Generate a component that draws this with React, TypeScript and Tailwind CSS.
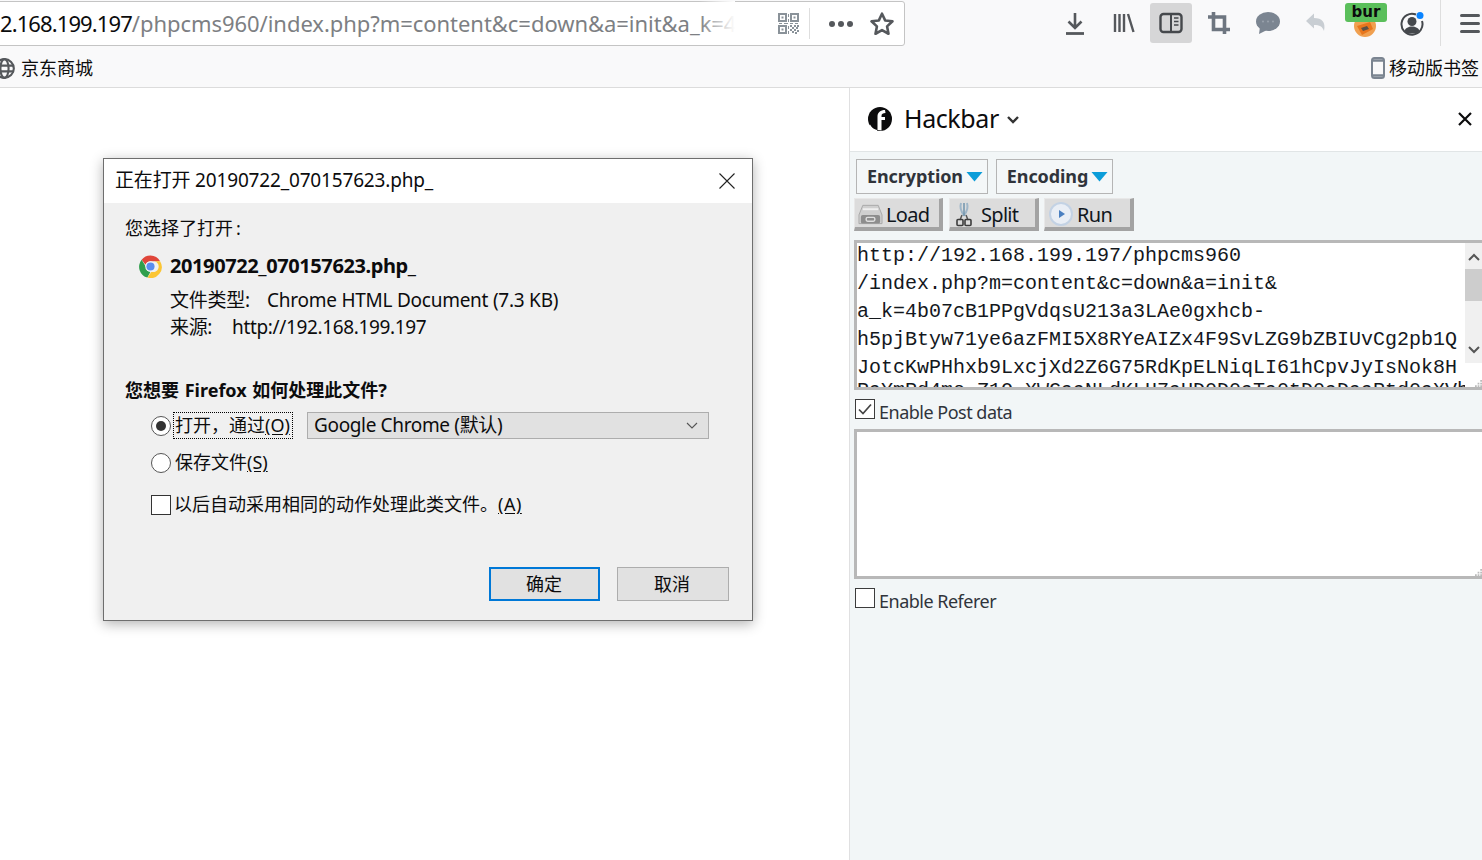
import type { ReactNode } from "react";

const sans = "font-['Noto_Sans','Noto_Sans_CJK_SC',sans-serif]";

const urlLines = [
  "http://192.168.199.197/phpcms960",
  "/index.php?m=content&c=down&a=init&",
  "a_k=4b07cB1PPgVdqsU213a3LAe0gxhcb-",
  "h5pjBtyw71ye6azFMI5X8RYeAIZx4F9SvLZG9bZBIUvCg2pb1Q",
  "JotcKwPHhxb9LxcjXd2Z6G75RdKpELNiqLI61hCpvJyIsNok8H",
];

const ToolIcon = ({ className, children }: { className: string; children: ReactNode }) => (
  <svg viewBox="0 0 24 24" className={className} fill="none">
    {children}
  </svg>
);

const QrIcon = () => (
  <svg viewBox="0 0 21 21" className="w-[21px] h-[21px]" fill="#8a9299">
    <path d="M0 0h9v9H0zM2 2v5h5V2zM3.500 3.500h2v2h-2zM12 0h9v9h-9zM14 2v5h5V2zM15.500 3.500h2v2h-2zM0 12h9v9H0zM2 14v5h5v-5zM3.500 15.500h2v2h-2z" fillRule="evenodd" />
    <path d="M10 1h1v3h-1zM10 6h1v3h-1zM1 10h3v1H1zM6 10h4v1H6zM12 10h3v1h-3zM17 10h3v1h-3zM12 12h2v2h-2zM16 12h2v2h-2zM19 12h2v2h-2zM14 14h2v2h-2zM18 14h2v2h-2zM12 16h2v2h-2zM16 16h2v2h-2zM19 17h2v2h-2zM14 18h2v2h-2zM10 13h1v3h-1zM10 18h1v3h-1zM17 19h2v2h-2z" />
  </svg>
);

const ChromeIcon = () => (
  <svg viewBox="0 0 48 48" className="w-[23px] h-[23px]">
    <path d="M24 1a23 23 0 0 1 20 12H24a11 11 0 0 0-10.400 7.500L5.500 10A23 23 0 0 1 24 1z" fill="#e0463a" />
    <path d="M5.500 10l9.500 15.500A10 10 0 0 0 24 35l-6.500 12A23 23 0 0 1 5.500 10z" fill="#2f9e4c" />
    <path d="M44 13a23 23 0 0 1-26.500 34l8.500-12a11 11 0 0 0 7-22z" fill="#fbc534" />
    <circle cx="24" cy="24" r="11" fill="#f4f4f4" />
    <circle cx="24" cy="24" r="8.500" fill="#5a8df0" />
  </svg>
);

const Radio = ({ checked }: { checked?: boolean }) => (
  <span className="w-[20px] h-[20px] rounded-full border border-[#555] bg-white flex items-center justify-center shrink-0">
    {checked && <span className="w-[10px] h-[10px] rounded-full bg-[#333]" />}
  </span>
);

const PanelCheck = ({ label, checked }: { label: string; checked?: boolean }) => (
  <div className="flex items-start h-[20px] ml-[5px]">
    <span className="w-[20px] h-[20px] border border-[#3c3c3c] bg-white flex items-center justify-center shrink-0">
      {checked && (
        <svg viewBox="0 0 18 18" className="w-[18px] h-[18px]" fill="none">
          <path d="M3 9.500l4 4 8-9" stroke="#444" strokeWidth="1.700" />
        </svg>
      )}
    </span>
    <span className="ml-[4px] mt-[2px] text-[18px] leading-[22px] text-[#30343b] tracking-[-0.5px]">{label}</span>
  </div>
);

const ToolButton = ({ width, icon, label }: { width: string; icon: ReactNode; label: string }) => (
  <div className={`${width} h-[33px] bg-[#dcdcdc] border-t border-l border-t-[#e8e8e8] border-l-[#e8e8e8] border-b-[4px] border-r-[4px] border-b-[#a3a3a3] border-r-[#a3a3a3] flex items-center text-[20px] text-[#10161c] tracking-[-0.7px]`}>
    {icon}
    <span className="mt-[3px]">{label}</span>
  </div>
);

const Dropdown = ({ width, label }: { width: string; label: string }) => (
  <div className={`${width} h-[35px] border border-[#b5b5b5] bg-[#f4f7f8] flex items-center justify-center gap-[3px] pl-[6px] text-[18px] font-bold text-[#30343b] tracking-[-0.1px]`}>
    {label}
    <svg viewBox="0 0 16 10" className="w-[17px] h-[10px]">
      <path d="M0 0h16L8 9.500z" fill="#0b9dd9" />
    </svg>
  </div>
);

const UrlBox = ({ children, height }: { children?: ReactNode; height: string }) => (
  <div className={`${height} ml-[4px] -mr-[6px] border-[3px] border-r-0 border-[#b8b8b8] bg-white relative overflow-hidden`}>
    {children}
    <svg viewBox="0 0 8 8" className="absolute right-[6px] bottom-0 w-[7px] h-[7px]" fill="#bbb">
      <path d="M6 0h2v2H6zM3 3h2v2H3zM6 3h2v2H6zM0 6h2v2H0zM3 6h2v2H3zM6 6h2v2H6z" />
    </svg>
  </div>
);

const App = () => {
  return (
    <div className={`${sans} w-[1482px] h-[860px] overflow-hidden bg-white relative flex flex-col text-black`}>
      {/* browser toolbar */}
      <div className="h-[46px] bg-[#f9f9fa] flex items-start shrink-0">
        <div className="-ml-[8px] mt-[1px] w-[913px] h-[45px] bg-white border border-[#c4c4c4] rounded-[3px] flex items-center">
          <div className="relative w-[735px] ml-[7px] -mt-[2px] overflow-hidden whitespace-nowrap text-[22px] leading-[44px] tracking-[-0.05px] text-[#7d7f83]">
            <span className="text-[#0c0c0d] tracking-[-0.9px]">2.168.199.197</span>/phpcms960/index.php?m=content&amp;c=down&amp;a=init&amp;a_k=4b07cB1PPg
            <div className="absolute right-0 top-0 w-[36px] h-full bg-gradient-to-r from-white/0 to-white" />
          </div>
          <div className="ml-[43px]"><QrIcon /></div>
          <div className="ml-[10px] w-px h-[31px] bg-[#dedede]" />
          <div className="ml-[19px] flex gap-[3px]">
            <span className="w-[6px] h-[6px] rounded-full bg-[#55585c]" />
            <span className="w-[6px] h-[6px] rounded-full bg-[#55585c]" />
            <span className="w-[6px] h-[6px] rounded-full bg-[#55585c]" />
          </div>
          <svg viewBox="0 0 24 24" className="ml-[16px] w-[26px] h-[26px]" fill="none">
            <path d="M12 2.500l2.900 6.200 6.800.8-5 4.700 1.300 6.800-6-3.400-6 3.400 1.300-6.800-5-4.700 6.800-.8z" stroke="#55585c" strokeWidth="2.400" strokeLinejoin="round" />
          </svg>
        </div>

        <div className="ml-[158px] flex items-center h-[46px] relative">
          <ToolIcon className="w-[24px] h-[24px]">
            <path d="M12 2v15M5.500 10.500L12 17l6.500-6.500" stroke="#55585c" strokeWidth="2.600" />
            <path d="M3 22.500h18" stroke="#55585c" strokeWidth="2.800" />
          </ToolIcon>
          <ToolIcon className="ml-[24px] w-[26px] h-[24px]">
            <path d="M3 3v18M7.500 3v18M12 3v18M16 3l5.500 18" stroke="#55585c" strokeWidth="2.400" />
          </ToolIcon>
          <div className="ml-[13px] w-[42px] h-[40px] rounded-[3px] bg-[#d6d6d7] flex items-center justify-center">
            <svg viewBox="0 0 24 24" className="w-[26px] h-[24px]" fill="none">
              <rect x="1.500" y="3" width="21" height="18" rx="3" stroke="#45484c" strokeWidth="2.400" />
              <path d="M12 3v18" stroke="#45484c" strokeWidth="2" />
              <path d="M15 7h4.500M15 10.500h4.500M15 14h4.500" stroke="#45484c" strokeWidth="1.500" />
            </svg>
          </div>
          <ToolIcon className="ml-[15px] w-[24px] h-[24px]">
            <path d="M6.500 1v17.500H23M1 6h16.500v17" stroke="#6e7680" strokeWidth="3.600" />
          </ToolIcon>
          <svg viewBox="0 0 26 24" className="ml-[24px] w-[26px] h-[24px]">
            <ellipse cx="13" cy="10.500" rx="12" ry="9.500" fill="#7b8591" />
            <path d="M5 16l-1 7 8-4z" fill="#7b8591" />
            <circle cx="8" cy="10.500" r="1" fill="#9aa3ad" />
            <circle cx="13" cy="10.500" r="1" fill="#9aa3ad" />
            <circle cx="18" cy="10.500" r="1" fill="#9aa3ad" />
          </svg>
          <ToolIcon className="ml-[23px] w-[24px] h-[24px]">
            <path d="M2 10l8-7.500v4.500c8 0 12 4 10 13-1.500-4.500-4.500-6-10-6v3.500z" fill="#c9ced3" />
          </ToolIcon>
          <svg viewBox="0 0 24 24" className="ml-[25px] mt-[6px] w-[24px] h-[24px]">
            <circle cx="12" cy="12" r="11" fill="#f0a050" />
            <path d="M4 12l13-4 3 7-11 6z" fill="#e8761c" />
            <path d="M8 14l6-2 2 3-6 2z" fill="#5c5146" />
          </svg>
          <svg viewBox="0 0 24 24" className="ml-[23px] w-[24px] h-[24px] mt-[2px]" fill="none">
            <path d="M16 2.500A10.500 10.500 0 1 0 22 9" stroke="#45484c" strokeWidth="2" />
            <circle cx="12" cy="9.500" r="4.500" fill="#45484c" />
            <path d="M4.500 19c1.500-6 13.500-6 15 0l-3 2.500h-9z" fill="#45484c" />
            <circle cx="20" cy="3.500" r="3.500" fill="#0a84ff" />
          </svg>
          <div className="ml-[16px] w-px h-[46px] bg-[#dedede]" />
          <div className="ml-[19px] w-[20px] flex flex-col gap-[5px]">
            <span className="h-[3px] bg-[#55585c] rounded-sm" />
            <span className="h-[3px] bg-[#55585c] rounded-sm" />
            <span className="h-[3px] bg-[#55585c] rounded-sm" />
          </div>
          {/* extension badge */}
          <div className="absolute left-[282px] top-[3px] w-[42px] h-[19px] rounded-[3px] bg-[#5bbf5b] text-center text-[15px] leading-[18px] font-bold font-['DejaVu_Sans',sans-serif] text-[#0c0c0d]">bur</div>
        </div>
      </div>

      {/* bookmarks bar */}
      <div className="h-[42px] bg-[#f9f9fa] border-b border-[#dcdcdc] flex items-center justify-between shrink-0 text-[18px] text-[#0c0c0d]">
        <div className="flex items-center -ml-[6px] mt-[3px]">
          <svg viewBox="0 0 18 18" className="w-[21px] h-[21px]" fill="none" stroke="#55585c" strokeWidth="1.800">
            <circle cx="9" cy="9" r="8" />
            <ellipse cx="9" cy="9" rx="3.500" ry="8" />
            <path d="M1 6.500h16M1 11.500h16" />
          </svg>
          <span className="ml-[6px]">京东商城</span>
        </div>
        <div className="flex items-center mr-[3px] mt-[3px]">
          <svg viewBox="0 0 14 22" className="w-[14px] h-[22px]" fill="none">
            <rect x="1" y="1" width="12" height="20" rx="2.500" stroke="#7b8591" strokeWidth="2" />
            <path d="M1 3.500h12M1 18.500h12" stroke="#7b8591" strokeWidth="2.500" />
          </svg>
          <span className="ml-[4px]">移动版书签</span>
        </div>
      </div>

      <div className="flex-1 flex min-h-0">
        <div className="w-[849px] bg-white shrink-0" />

        {/* hackbar sidebar */}
        <div className="flex-1 border-l border-[#e0e0e1] bg-[#f2f6f7] flex flex-col min-w-0">
          <div className="h-[64px] bg-white border-b border-[#e1e5e6] flex items-center pl-[18px] pr-[10px] shrink-0">
            <svg viewBox="0 0 24 24" className="w-[24px] h-[24px] -mt-[1px]">
              <circle cx="12" cy="12" r="12" fill="#0c0c0d" />
              <path d="M9.500 23V9.500c0-4 3-6.500 7.500-6.500l.5 3c-2.500 0-4 .8-4 3v1h3.500v3h-3.500v10.500z" fill="#fff" />
              <path d="M2 17.500c1.500 3 4 5 7 5.500v1H6l-5-5z" fill="#fff" />
            </svg>
            <span className="ml-[12px] -mt-[4px] text-[25px] leading-[30px] text-[#0c0c0d] tracking-[-0.4px]">Hackbar</span>
            <svg viewBox="0 0 14 10" className="ml-[7px] w-[14px] h-[10px]" fill="none">
              <path d="M2 2l5 5 5-5" stroke="#333" strokeWidth="2.400" />
            </svg>
            <svg viewBox="0 0 14 14" className="ml-auto w-[14px] h-[14px] -mt-[2px]" fill="none">
              <path d="M1 1l12 12M13 1L1 13" stroke="#0c0c0d" strokeWidth="2.200" />
            </svg>
          </div>

          <div className="flex gap-[8px] ml-[6px] mt-[7px]">
            <Dropdown width="w-[132px]" label="Encryption" />
            <Dropdown width="w-[117px]" label="Encoding" />
          </div>

          <div className="flex ml-[4px] mt-[4px]">
            <ToolButton
              width="w-[89px]"
              label="Load"
              icon={
                <svg viewBox="0 0 26 24" className="ml-[3px] mr-[3px] w-[25px] h-[24px] mt-[2px]" fill="none">
                  <path d="M5 3h16l4 10v9H1v-9z" fill="#cfcfcf" stroke="#a8a8a8" />
                  <path d="M5 7h16" stroke="#efefef" strokeWidth="2" />
                  <rect x="3" y="13" width="20" height="9" rx="2" fill="#8d8d8d" />
                  <rect x="8.500" y="15.500" width="9" height="4" rx="1.500" stroke="#dedede" strokeWidth="1.500" />
                </svg>
              }
            />
            <ToolButton
              width="w-[90px] ml-[6px]"
              label="Split"
              icon={
                <svg viewBox="0 0 18 26" className="ml-[5px] mr-[8px] w-[18px] h-[26px] mt-[2px]" fill="none">
                  <path d="M6 2c-1.500 5-.5 8 3 12 3.500-4 4.500-7 3-12" stroke="#9fb6c8" strokeWidth="2" />
                  <path d="M9 2v13" stroke="#6f93ad" strokeWidth="1.500" />
                  <path d="M7 14l-2 5M11 14l2 5" stroke="#555" strokeWidth="1.500" />
                  <rect x="2" y="18.500" width="6" height="6" rx="1" stroke="#3c3c3c" strokeWidth="1.600" />
                  <rect x="10" y="18.500" width="6" height="6" rx="1" stroke="#3c3c3c" strokeWidth="1.600" />
                </svg>
              }
            />
            <ToolButton
              width="w-[90px] ml-[5px]"
              label="Run"
              icon={
                <svg viewBox="0 0 24 24" className="ml-[4px] mr-[4px] w-[24px] h-[24px] mt-[2px]">
                  <circle cx="12" cy="12" r="11" fill="#e9eef5" stroke="#c3d2e4" strokeWidth="2" />
                  <path d="M10 8l6 4-6 4z" fill="#4a7fc0" />
                </svg>
              }
            />
          </div>

          <div className="mt-[9px]">
            <UrlBox height="h-[150px]">
              <div className="flex h-full">
                <div className="flex-1 min-w-0 overflow-hidden -mt-[1px] font-['Liberation_Mono',monospace] text-[20px] leading-[28px] text-[#14181d] whitespace-pre">
                  {urlLines.map((line) => (
                    <div key={line}>{line}</div>
                  ))}
                  {/* next line is only peeking in at the bottom of the box */}
                  <div className="-mt-[5px]">PaYmRd4me-Z1Q-XWGaaNLdKLH7aUD0D0aTa0tD0aDaaRtd0aXVb</div>
                </div>
                <div className="w-[17px] h-[120px] bg-[#f0f0f0] flex flex-col items-center justify-between shrink-0 mr-[6px] relative">
                  <svg viewBox="0 0 12 8" className="mt-[10px] w-[12px] h-[8px]" fill="none">
                    <path d="M1 7l5-5 5 5" stroke="#555" strokeWidth="2" />
                  </svg>
                  <div className="absolute left-0 top-[26px] w-[17px] h-[32px] bg-[#cdcdcd]" />
                  <svg viewBox="0 0 12 8" className="mb-[9px] w-[12px] h-[8px]" fill="none">
                    <path d="M1 1l5 5 5-5" stroke="#555" strokeWidth="2" />
                  </svg>
                </div>
              </div>
            </UrlBox>
          </div>

          <div className="mt-[9px]">
            <PanelCheck label="Enable Post data" checked />
          </div>

          <div className="mt-[10px]">
            <UrlBox height="h-[150px]" />
          </div>

          <div className="mt-[9px]">
            <PanelCheck label="Enable Referer" />
          </div>
        </div>
      </div>

      {/* download dialog */}
      <div className="absolute left-[103px] top-[158px] w-[650px] h-[463px] border border-[#6e6e6e] bg-[#f0f0f0] shadow-[0_3px_12px_rgba(0,0,0,0.3)] flex flex-col text-[#0c0c0d]">
        <div className="h-[44px] bg-white flex items-center pl-[11px] pr-[17px] shrink-0 text-[19px]">
          <span className="tracking-[-0.17px] -mt-[2px]">正在打开 20190722_070157623.php_</span>
          <svg viewBox="0 0 16 16" className="ml-auto w-[16px] h-[16px]" fill="none">
            <path d="M0.500 0.500l15 15M15.500 0.500l-15 15" stroke="#222" strokeWidth="1.100" />
          </svg>
        </div>

        <div className="pl-[21px] mt-[11px] text-[18px] leading-[28px]">您选择了打开<span className="ml-[3px]">:</span></div>

        <div className="flex items-center pl-[35px] mt-[10px] h-[28px]">
          <ChromeIcon />
          <span className="ml-[8px] text-[20px] font-bold tracking-[-0.4px]">20190722_070157623.php_</span>
        </div>

        <div className="flex pl-[66px] mt-[6px] text-[19px] leading-[28px] tracking-[-0.25px]">
          <span className="w-[97px]">文件类型:</span>
          <span>Chrome HTML Document (7.3 KB)</span>
        </div>
        <div className="flex pl-[66px] text-[19px] leading-[27px] tracking-[-0.35px]">
          <span className="w-[62px]">来源:</span>
          <span>http://192.168.199.197</span>
        </div>

        <div className="pl-[21px] mt-[35px] text-[18px] leading-[28px] font-bold [word-spacing:1px]">您想要 Firefox 如何处理此文件?</div>

        <div className="flex items-center pl-[47px] mt-[8px] h-[27px]">
          <Radio checked />
          <span className="ml-[2px] w-[120px] h-[27px] border border-dotted border-black text-[18px] leading-[25px] whitespace-nowrap pl-px">
            打开，通过<span className="underline underline-offset-2">(O)</span>
          </span>
          <div className="ml-[14px] w-[402px] h-[27px] border border-[#adadad] bg-[#e1e1e1] flex items-center pl-[6px] pr-[10px] text-[19px] tracking-[-0.35px]">
            Google Chrome (默认)
            <svg viewBox="0 0 12 8" className="ml-auto w-[12px] h-[8px]" fill="none">
              <path d="M1 1l5 5 5-5" stroke="#555" strokeWidth="1.100" />
            </svg>
          </div>
        </div>

        <div className="flex items-center pl-[47px] mt-[10px] h-[27px]">
          <Radio />
          <span className="ml-[4px] text-[18px]">保存文件<span className="underline underline-offset-2">(S)</span></span>
        </div>

        <div className="flex items-center pl-[47px] mt-[15px] h-[27px]">
          <span className="w-[20px] h-[20px] border border-[#333] bg-white shrink-0" />
          <span className="ml-[3px] text-[18px]">以后自动采用相同的动作处理此类文件。<span className="underline underline-offset-2 tracking-[0.5px]">(A)</span></span>
        </div>

        <div className="flex justify-end gap-[17px] pr-[23px] mt-auto mb-[19px] text-[18px]">
          <div className="w-[111px] h-[34px] border-2 border-[#0078d7] bg-[#e1e1e1] flex items-center justify-center pr-px">确定</div>
          <div className="w-[112px] h-[34px] border border-[#adadad] bg-[#e1e1e1] flex items-center justify-center pr-[2px]">取消</div>
        </div>
      </div>
    </div>
  );
};

export default App;
